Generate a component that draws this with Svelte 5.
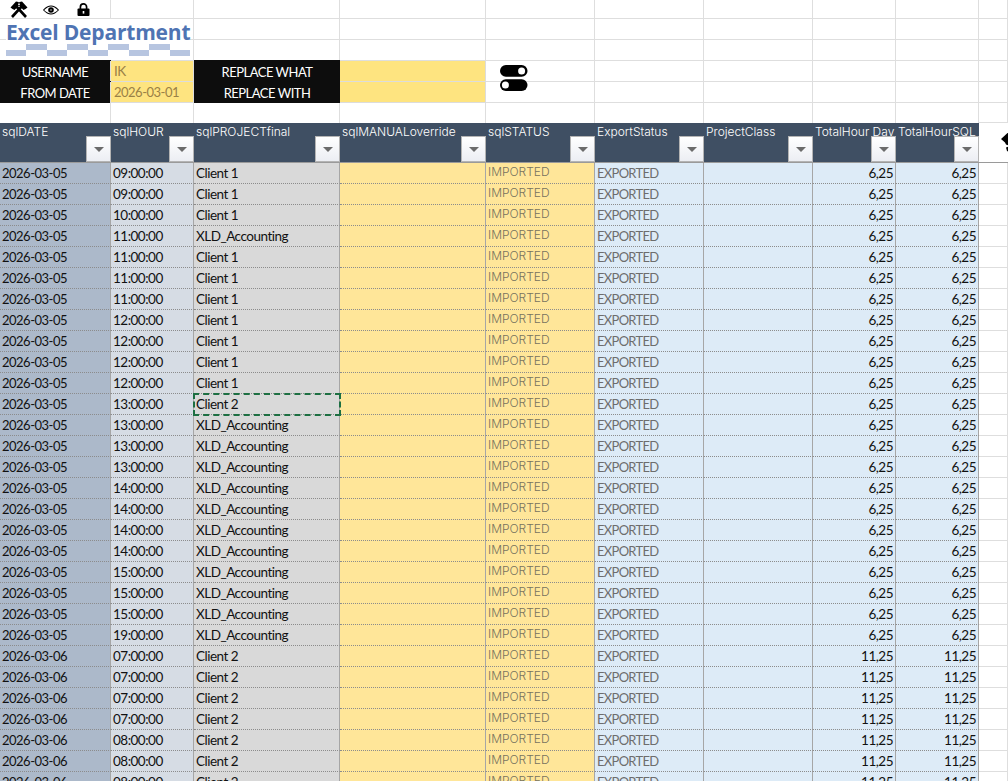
<script>
  const cols = [111, 83, 146, 146, 109, 109, 109, 83, 83, 29];
  const heads = ['sqlDATE', 'sqlHOUR', 'sqlPROJECTfinal', 'sqlMANUALoverride', 'sqlSTATUS', 'ExportStatus', 'ProjectClass', 'TotalHour Day', 'TotalHourSQL'];

  const rowsSpec = [
    ['05', '09', 'Client 1'], ['05', '09', 'Client 1'], ['05', '10', 'Client 1'], ['05', '11', 'XLD_Accounting'],
    ['05', '11', 'Client 1'], ['05', '11', 'Client 1'], ['05', '11', 'Client 1'], ['05', '12', 'Client 1'],
    ['05', '12', 'Client 1'], ['05', '12', 'Client 1'], ['05', '12', 'Client 1'], ['05', '13', 'Client 2'],
    ['05', '13', 'XLD_Accounting'], ['05', '13', 'XLD_Accounting'], ['05', '13', 'XLD_Accounting'], ['05', '14', 'XLD_Accounting'],
    ['05', '14', 'XLD_Accounting'], ['05', '14', 'XLD_Accounting'], ['05', '14', 'XLD_Accounting'], ['05', '15', 'XLD_Accounting'],
    ['05', '15', 'XLD_Accounting'], ['05', '15', 'XLD_Accounting'], ['05', '19', 'XLD_Accounting'], ['06', '07', 'Client 2'],
    ['06', '07', 'Client 2'], ['06', '07', 'Client 2'], ['06', '07', 'Client 2'], ['06', '08', 'Client 2'],
    ['06', '08', 'Client 2'], ['06', '08', 'Client 2']
  ];
  const rows = rowsSpec.map(([d, h, p]) => ({
    date: `2026-03-${d}`,
    hour: `${h}:00:00`,
    project: p,
    total: d === '05' ? '6,25' : '11,25'
  }));
</script>

<div class="sheet" style={`grid-template-columns: ${cols.map((c) => c + 'px').join(' ')}`}>
  <!-- top rows with icons and logo -->
  <div class="blank icons">
    <svg class="ic-tools" viewBox="0 0 20 17" width="20" height="17">
      <path d="M3 16 L13.5 4.5 M17 16 L6.5 4.5" stroke="#000" stroke-width="2.6" />
      <path d="M1.5 6.5 L7 0.5 L9.5 1 L11 3.5 L5.5 9 L3.5 8 Z M18.5 6.5 L13 0.5 L10.5 1 L9 3.5 L14.5 9 L16.5 8 Z" fill="#000" />
    </svg>
    <svg class="ic-eye" viewBox="0 0 16 10" width="16" height="10">
      <path d="M0.6 5 Q8 -3 15.4 5 Q8 13 0.6 5 Z" fill="#fff" stroke="#000" stroke-width="1.1" />
      <circle cx="8" cy="5" r="2.8" fill="#000" />
      <circle cx="8" cy="5" r="1" fill="#777" />
    </svg>
    <svg class="ic-lock" viewBox="0 0 13 13" width="13" height="13">
      <path d="M3.4 6 V4 a3.1 3.1 0 0 1 6.2 0 V6" fill="none" stroke="#000" stroke-width="1.7" />
      <rect x="0.5" y="5.5" width="12" height="7.5" rx="1" fill="#000" />
      <rect x="5.7" y="8" width="1.6" height="2.6" fill="#fff" />
    </svg>
  </div>
  {#each cols.slice(1) as _}<div class="blank"></div>{/each}

  <div class="blank logo-cell">
    <div class="logo">
      <span class="logo-text">Excel Department</span>
      <div class="checker">
        {#each Array(9) as _, i}<i class:up={i % 2 === 1}></i>{/each}
      </div>
    </div>
  </div>
  {#each cols.slice(1) as _}<div class="blank"></div>{/each}
  <div class="logo-gap"></div>
  {#each cols.slice(1) as _}<div class="blank"></div>{/each}

  <div class="black first">USERNAME</div>
  <div class="input">IK</div>
  <div class="black">REPLACE WHAT</div>
  <div class="input"></div>
  <div class="blank toggles">
    <svg viewBox="0 0 28 27" width="28" height="27">
      <rect x="0" y="0" width="27.5" height="11.8" rx="5.9" fill="#000" />
      <circle cx="21.6" cy="5.9" r="3.5" fill="#fff" />
      <rect x="0" y="14.3" width="27.5" height="11.6" rx="5.8" fill="#000" />
      <circle cx="5.4" cy="20.1" r="3.5" fill="#fff" />
    </svg>
  </div>
  {#each Array(5) as _}<div class="blank"></div>{/each}

  <div class="black first">FROM DATE</div>
  <div class="input date-val">2026-03-01</div>
  <div class="black">REPLACE WITH</div>
  <div class="input"></div>
  {#each Array(6) as _}<div class="blank"></div>{/each}

  {#each cols as _, i}<div class="blank" class:open={i < 9}></div>{/each}

  <!-- table head -->
  {#each heads as h}
    <div class="th">
      <span class="th-label">{h}</span>
      <span class="filter"><i></i></span>
    </div>
  {/each}
  <div class="side">
    <svg viewBox="0 0 8 20" width="8" height="20">
      <path d="M0 6 L6.5 0 H8 V12.5 L5 11.5 L4 9.5 Z M5 14.5 L8 13.5 V19 L6 18 Z" fill="#000" />
    </svg>
  </div>

  <!-- data rows -->
  {#each rows as row, i}
    <div class="td date">{row.date}</div>
    <div class="td hour">{row.hour}</div>
    <div class="td project" class:copied={i === 11}>{row.project}</div>
    <div class="td manual"></div>
    <div class="td status">IMPORTED</div>
    <div class="td exported">EXPORTED</div>
    <div class="td cls"></div>
    <div class="td num">{row.total}</div>
    <div class="td num">{row.total}</div>
    <div class="blank"></div>
  {/each}
</div>

<style>
  :global(body) { margin: 0; background: #fff; overflow: hidden; }
  .sheet {
    display: grid;
    grid-auto-rows: 21px;
    grid-template-rows: 19px 21px 21px 21px 21px 20px 40px;
    width: 1008px;
    height: 781px;
    overflow: hidden;
    font-family: Lato, "Liberation Sans", sans-serif;
    font-size: 13.5px;
    letter-spacing: -0.5px;
    color: #111;
  }
  .blank { border-right: 1px solid #dedede; border-bottom: 1px solid #dedede; box-sizing: border-box; }
  .blank.open { border-bottom: none; }
  .icons { display: flex; align-items: center; }
  .ic-tools { margin-left: 9px; }
  .ic-eye { margin-left: 14px; margin-top: 2px; }
  .ic-lock { margin-left: 18px; }
  .logo-cell { position: relative; border-right: none; }
  .logo { position: absolute; left: 6px; top: 1px; width: 184px; height: 40px; z-index: 1; background: #fff; }
  .logo-text { display: block; font-family: "Open Sans", sans-serif; font-weight: 700; font-size: 21px; line-height: 24px; color: #4f74b3; white-space: nowrap; letter-spacing: -0.2px; }
  .checker { display: flex; height: 12px; }
  .checker i { flex: 1; background: #b7c5e0; height: 6px; margin-top: 6px; }
  .checker i.up { margin-top: 0; }
  .black { background: #0d0d0d; color: #fff; display: flex; align-items: center; justify-content: center; font-size: 13px; letter-spacing: -0.5px; box-shadow: 0 -1px 0 #0d0d0d; }
  .black.first { border-right: 1px solid #dcdcdc; box-sizing: border-box; }
  .input { background: #fee480; color: #9a8146; padding-left: 3px; display: flex; align-items: center; border-bottom: 1px solid #dcdcdc; border-right: 1px solid #dcdcdc; box-sizing: border-box; }
  .date-val { font-size: 13px; }
  .toggles { padding: 4px 0 0 14px; }
  .toggles svg { display: block; }
  .th { background: #3f4f63; color: #fff; position: relative; box-sizing: border-box; padding: 2px 0 0 2px; font-family: Inter, "Liberation Sans", sans-serif; font-weight: 300; font-size: 12px; letter-spacing: 0; white-space: nowrap; overflow: hidden; border-bottom: 1px solid #9a9a9a; }
  .th-label { display: block; line-height: 14px; }
  .filter { position: absolute; right: 0; bottom: 0; width: 25px; height: 26px; box-sizing: border-box; border: 1px solid #b4b4b4; background: linear-gradient(#fff, #eceef3); display: flex; align-items: center; justify-content: center; }
  .filter i { border-left: 5px solid transparent; border-right: 5px solid transparent; border-top: 5px solid #6b6b6b; }
  .side { border-bottom: 1px solid #9a9a9a; overflow: hidden; padding: 10px 0 0 22px; box-sizing: border-box; }
  .side svg { display: block; }
  .td { box-sizing: border-box; padding: 0 2px; line-height: 21px; white-space: nowrap; overflow: hidden; border-bottom: 1px dotted #8c8c8c; border-right: 1px solid #a6a6a6; }
  .date { background: #acb9ca; font-size: 13px; }
  .hour { background: #d6dce4; }
  .project { background: #d9d9d9; }
  .manual { background: #ffe699; }
  .status { background: #ffe699; color: #77725f; font-family: Inter, "Liberation Sans", sans-serif; font-weight: 300; font-size: 12px; letter-spacing: 0; line-height: 18px; }
  .exported { background: #ddebf7; color: #6d6d6d; font-size: 13px; letter-spacing: -0.7px; }
  .cls { background: #ddebf7; }
  .num { background: #ddebf7; text-align: right; }
  .copied { position: relative; z-index: 1; overflow: visible; outline: 2px dashed #1d6f42; outline-offset: -1px; }
</style>
